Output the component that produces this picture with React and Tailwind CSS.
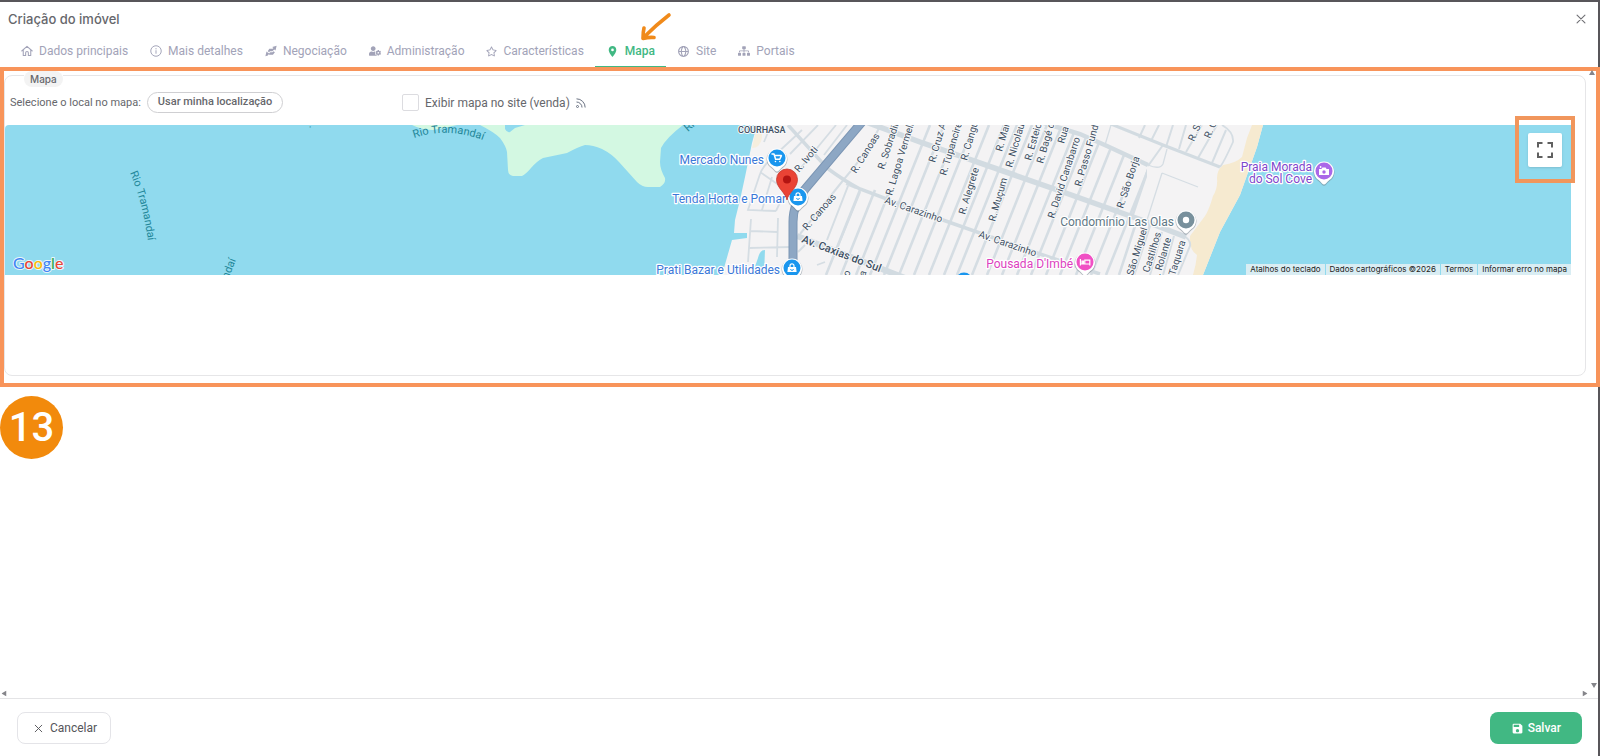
import { useState } from 'react';
import { FaRegStar, FaSitemap, FaUserCog } from 'react-icons/fa';
import { BiGlobe } from 'react-icons/bi';
import { MdLocationOn, MdSave } from 'react-icons/md';
import { IoCloseOutline } from 'react-icons/io5';

const HomeIcon = () => (
  <svg viewBox="0 0 16 16" className="w-3 h-3" fill="none" stroke="currentColor" strokeWidth="1.4" strokeLinejoin="round" strokeLinecap="round">
    <path d="M1 8 8 1.8 15 8M3 6.8V14h3.2v-3.6a1.8 1.8 0 0 1 3.6 0V14H13V6.8" />
  </svg>
);

const InfoIcon = () => (
  <svg viewBox="0 0 16 16" className="w-3 h-3" fill="none" stroke="currentColor" strokeWidth="1.3">
    <circle cx="8" cy="8" r="7" />
    <path d="M8 7v4.6M8 4.2v1.6" />
  </svg>
);

const DealIcon = () => (
  <svg viewBox="0 0 16 16" className="w-3 h-3" fill="currentColor">
    <path d="M15.5 1 14 7.3 12.4 6 9.8 8.4H6.6l-1 1.4L3.6 8.2 5.8 5h4.4l1-1L9.6 2.6z" />
    <path d="M.5 15 2 8.7 3.6 10l2 1.4 1.4-1.6h3l1.4-1.6 1.8 1.6L10.6 13H6L4.8 12.4 3.8 14z" />
  </svg>
);

const TABS = [
  { id: 'dados',           label: 'Dados principais', icon: <HomeIcon /> },
  { id: 'detalhes',        label: 'Mais detalhes',    icon: <InfoIcon /> },
  { id: 'negociacao',      label: 'Negociação',       icon: <DealIcon /> },
  { id: 'administracao',   label: 'Administração',    icon: <FaUserCog size={12} /> },
  { id: 'caracteristicas', label: 'Características',  icon: <FaRegStar size={11} /> },
  { id: 'mapa',            label: 'Mapa',             icon: <MdLocationOn size={13} /> },
  { id: 'site',            label: 'Site',             icon: <BiGlobe size={13} /> },
  { id: 'portais',         label: 'Portais',          icon: <FaSitemap size={12} /> },
];

// x where each cross street meets the bottom edge of the map
const STREETS = [826, 841, 856, 870, 884, 899, 914, 929, 944, 957, 972, 987, 1002, 1017, 1031, 1046, 1060, 1076, 1091, 1106];

const STREET_LABELS = [
  { x: 799,  y: 173, a: -50, t: 'R. Ivoti' },
  { x: 856,  y: 174, a: -58, t: 'R. Canoas' },
  { x: 807,  y: 231, a: -49, t: 'R. Canoas' },
  { x: 884,  y: 170, a: -72, t: 'R. Sobradinho' },
  { x: 892,  y: 196, a: -73, t: 'R. Lagoa Vermelha' },
  { x: 935,  y: 163, a: -74, t: 'R. Cruz Alta' },
  { x: 946,  y: 176, a: -73, t: 'R. Tupanciretã' },
  { x: 967,  y: 161, a: -74, t: 'R. Canguçu' },
  { x: 965,  y: 215, a: -73, t: 'R. Alegrete' },
  { x: 995,  y: 222, a: -74, t: 'R. Muçum' },
  { x: 1002, y: 152, a: -74, t: 'R. Marau' },
  { x: 1012, y: 168, a: -74, t: 'R. Nicolau V.' },
  { x: 1031, y: 161, a: -74, t: 'R. Esteio' },
  { x: 1043, y: 164, a: -74, t: 'R. Bagé da' },
  { x: 1064, y: 144, a: -74, t: 'Rua Jari' },
  { x: 1054, y: 219, a: -72, t: 'R. David Canabarro' },
  { x: 1081, y: 187, a: -74, t: 'R. Passo Fundo' },
  { x: 1123, y: 209, a: -72, t: 'R. São Borja' },
  { x: 1194, y: 142, a: -66, t: 'R. São' },
  { x: 1210, y: 139, a: -66, t: 'R. Gua' },
  { x: 1133, y: 276, a: -73, t: 'São Miguel' },
  { x: 1149, y: 273, a: -73, t: 'Castilhos' },
  { x: 1160, y: 276, a: -73, t: '. Rolante' },
  { x: 1175, y: 276, a: -73, t: 'Taquara' },
  { x: 849,  y: 277, a: -72, t: 'o' },
  { x: 865,  y: 277, a: -72, t: 'a' },
  { x: 884,  y: 203, a: 19,  t: 'Av. Carazinho' },
  { x: 978,  y: 237, a: 19,  t: 'Av. Carazinho' },
];

const PLACES = [
  { x: 777,  y: 158, color: '#1a96ee', text: '#3b78d8', glyph: 'cart',   lines: [{ x: 764,  y: 164, t: 'Mercado Nunes' }] },
  { x: 798,  y: 197, color: '#1a96ee', text: '#3b78d8', glyph: 'bag',    lines: [{ x: 786,  y: 203, t: 'Tenda Horta e Pomar' }] },
  { x: 792,  y: 268, color: '#1a96ee', text: '#3b78d8', glyph: 'bag',    lines: [{ x: 780,  y: 274, t: 'Prati Bazar e Utilidades' }] },
  { x: 1186, y: 220, color: '#78909c', text: '#5f7885', glyph: 'dot',    lines: [{ x: 1174, y: 226, t: 'Condomínio Las Olas' }] },
  { x: 1085, y: 262, color: '#f050c4', text: '#dd3fc0', glyph: 'bed',    lines: [{ x: 1073, y: 268, t: "Pousada D'Imbé" }] },
  { x: 1324, y: 171, color: '#aa68e8', text: '#7e46cc', glyph: 'camera', lines: [{ x: 1312, y: 171, t: 'Praia Morada' }, { x: 1312, y: 183, t: 'do Sol Cove' }] },
];

const GLYPHS = {
  cart: <path d="M-5-4h2l1.6 5.2h4.2L4.4-2.4h-6.6M-1.6 3.6h.1M2.8 3.6h.1" fill="none" stroke="#fff" strokeWidth="1.5" strokeLinecap="round" strokeLinejoin="round" />,
  bag: (
    <>
      <path d="M-4-1h8l.6 5h-9.2z" fill="#fff" />
      <path d="M-2-.6v-1.6a2 2 0 0 1 4 0v1.6" fill="none" stroke="#fff" strokeWidth="1.2" />
      <path d="M-1.4 1a1.4 1.4 0 0 0 2.8 0" fill="none" stroke="#1a96ee" strokeWidth=".9" />
    </>
  ),
  dot: <circle r="3.2" fill="#fff" />,
  bed: <path d="M-4.6-3V3.4M-4.6 2H4.8V3.4M4.8 2V-1.8H-.2V2M-3-.8h1.4V.8H-3z" fill="none" stroke="#fff" strokeWidth="1.2" />,
  camera: (
    <>
      <path d="M-5-2h2.4l1-1.4h3.2l1 1.4H5v6H-5z" fill="#fff" />
      <circle cy="1" r="1.7" fill="#aa68e8" />
      <circle cx="-3.4" cy="-4" r=".9" fill="#fff" />
    </>
  ),
};

const MapPin = ({ place }) => (
  <g>
    {place.lines.map((line) => (
      <text key={line.t} x={line.x} y={line.y} textAnchor="end" fontSize="12" fill={place.text} stroke="#fff" strokeWidth="2.5" paintOrder="stroke" strokeLinejoin="round">
        {line.t}
      </text>
    ))}
    <g transform={`translate(${place.x} ${place.y})`}>
      <path d="M0 14.8c-1.6 0-2.4-2-5.4-4.6A10.4 10.4 0 1 1 5.4 10.2C2.4 12.8 1.6 14.8 0 14.8z" fill="#6b7a85" opacity=".5" />
      <path d="M0 13.5c-1.6 0-2.4-2-5.4-4.6A10 10 0 1 1 5.4 8.9C2.4 11.5 1.6 13.5 0 13.5z" fill="#fff" />
      <circle r="8.5" fill={place.color} />
      {GLYPHS[place.glyph]}
    </g>
  </g>
);

const MapCanvas = () => (
  <svg viewBox="5 125 1566 150" preserveAspectRatio="xMidYMid slice" className="block w-full h-[150px] rounded-tl" role="img" aria-label="Mapa" fontFamily="Roboto, sans-serif">
    <defs>
      <clipPath id="city">
        <path d="M757 125 752 143 745 177 740 200 735 220 734 233H747V238L732 240 722 275H1190L1192 245 1147 222V166L1105 144 1050 125z" />
      </clipPath>
      <path id="river-top" d="M414 138Q449 126 488 142" />
      <path id="river-left" d="M130 173Q143 202 149 248" />
    </defs>

    <rect x="5" y="125" width="1566" height="150" fill="#90daee" />

    {/* Parks */}
    <g fill="#d3f8e2">
      <path d="M480 125Q494 132 500 138 506 146 507 152L508 170Q508 175 513 176H522Q526 174 531 168 537 161 543 158L567 153Q578 147 585 145 593 145 602 149 612 154 619 162L637 182Q642 187 648 187H660Q666 183 665 178 660 169 660 162L661 148Q666 138 683 125z" />
      <path d="M412 125Q422 130 433 130 445 128 457 125z" />
    </g>
    <path d="M505 125V129Q507 133 510 132L515 128 525 125z" fill="#90daee" />

    {/* Land and beach */}
    <path d="M757 125 752 143 745 177 740 200 735 220 734 233H747V238L732 240 722 275H1203L1220 232 1240 195 1257 147 1263 125z" fill="#f4f3f4" />
    <path d="M757 125 752 148Q760 148 762 138V125z" fill="#f6eedd" />
    <path d="M1252 125 1247 138 1242 157Q1236 163 1223 165 1217 170 1217 178 1218 188 1213 196 1209 210 1205 216L1190 236Q1189 250 1197 255 1196 265 1193 275H1203L1220 232 1240 195 1257 147 1263 125z" fill="#f6ead0" />
    <path d="M765 250Q760 250 758 258L752 275H764z" fill="#90daee" />

    {/* Cross streets */}
    <g clipPath="url(#city)" stroke="#d5dde3" strokeWidth="2.6">
      {STREETS.map((x) => (
        <path key={x} d={x < 870 ? `M${x} 275 ${x + 34} 190` : `M${x} 275 ${x + 60} 125`} />
      ))}
      <path d="M1119 275 1136 223M1132 217 1157 143M1134 275 1150 225" />
    </g>
    <g fill="none" stroke="#d5dde3" strokeWidth="2">
      <path d="M1145 125 1139 138M1159 125 1151 141M1173 125 1166 147M1186 125 1179 149M1202 125 1186 152M1217 125 1198 158M1226 130 1212 163M1163 145 1148 166" />
      <path d="M1148 165Q1160 170 1163 164L1167 149M1111 125 1105 145M1162 173 1198 187M1162 173 1147 220" strokeWidth="1.3" />
      <path d="M1220 167Q1224 162 1233 142 1234 132 1222 125" strokeWidth="1.8" />
      <path d="M1150 275 1162 232M1163 275 1174 236M1178 275 1190 246Q1191 240 1184 236" />
      <path d="M802 130 774 156Q762 167 760 174L748 210 776 211M760 172 786 190 776 211M772 177 762 210M836 125 799 170M818 125 790 154M847 125 824 155M771 125 764 142M793 131 808 147" strokeWidth="1.8" />
      <path d="M751 219 748 262M750 231 777 232M778 218 777 257M749 248 792 247M805 245 798 252M817 265 825 262" strokeWidth="1.8" />
      <path d="M879 128Q869 150 845 178L800 234M846 184 856 188" />
      <path d="M848 186 827 240M860 192 838 246" />
    </g>
    <g fill="none" stroke="#d2dbe1">
      <path d="M788 125 827 168Q846 182 860 189L940 219 1040 254 1100 274" strokeWidth="3.5" />
      <path d="M866 122 920 142 1063 192 1147 222 1186 237" strokeWidth="5.5" />
      <path d="M1044 123 1080 134 1107 146 1148 165" strokeWidth="4.5" />
      <path d="M1111 124 1163 145 1220 167" strokeWidth="3" />
      <path d="M797 236 905 278" strokeWidth="6" />
    </g>

    {/* Highway */}
    <path d="M862 122 806 188Q793 203 793 222V275" fill="none" stroke="#7c96b4" strokeWidth="9" />
    <path d="M862 122 806 188Q793 203 793 222V275" fill="none" stroke="#8da7c4" strokeWidth="7" />

    <g fontSize="10" fill="#3f5063" stroke="#f7f8f9" strokeWidth="2" paintOrder="stroke" strokeLinejoin="round">
      {STREET_LABELS.map((s, i) => (
        <text key={i} transform={`translate(${s.x} ${s.y}) rotate(${s.a})`}>{s.t}</text>
      ))}
      <text transform="translate(801 242) rotate(21)" fontSize="11" fontWeight="500">Av. Caxias do Sul</text>
      <text x="738" y="133" fontSize="9" fontWeight="500">COURHASA</text>
    </g>

    {/* Water names */}
    <g fontSize="11" fill="#1f8799">
      <text><textPath href="#river-top">Rio Tramandaí</textPath></text>
      <text><textPath href="#river-left">Rio Tramandaí</textPath></text>
      <text transform="translate(226 285) rotate(-68)">andaí</text>
      <text transform="translate(688 132) rotate(-42)">Rio</text>
      <text transform="translate(309 126) rotate(60)">.</text>
    </g>

    <circle cx="964" cy="281" r="8.5" fill="#1a96ee" />
    {PLACES.map((p) => <MapPin key={p.x} place={p} />)}

    {/* Selected location */}
    <path d="M787 200C786 193 776.5 188 776.5 179.5a10.5 10.5 0 0 1 21 0C797.5 188 788 193 787 200z" fill="#ea4335" stroke="#c5352b" strokeWidth=".8" />
    <circle cx="787" cy="179.5" r="4" fill="#b31412" />

    <text x="13" y="269" fontSize="16" fontFamily="Lato, sans-serif" fontWeight="500" stroke="#e9f6fa" strokeWidth="2" paintOrder="stroke" strokeLinejoin="round">
      <tspan fill="#4285f4">G</tspan><tspan fill="#ea4335">o</tspan><tspan fill="#fbbc04">o</tspan><tspan fill="#4285f4">g</tspan><tspan fill="#34a853">l</tspan><tspan fill="#ea4335">e</tspan>
    </text>
  </svg>
);

const MAP_LINKS = ['Dados cartográficos ©2026', 'Termos', 'Informar erro no mapa'];

const MapView = () => (
  <div className="relative mr-[14px]">
    <MapCanvas />

    <div className="absolute bottom-0 right-0 flex gap-px text-[8px] leading-[11px] text-[#222] font-[Inter,sans-serif]">
      <button className="bg-[#d9edf3] px-1">Atalhos do teclado</button>
      {MAP_LINKS.map((label) => (
        <a key={label} href="#mapa" className="bg-[#d9edf3] px-1">{label}</a>
      ))}
    </div>

    <div className="absolute -top-[9px] -right-1 flex h-[67px] w-[60px] items-center justify-center border-4 border-[#f1965c]">
      <button aria-label="Tela cheia" className="flex h-[34px] w-[34px] items-center justify-center rounded-xs bg-white text-[#606060] shadow">
        <svg viewBox="0 0 16 16" className="w-4 h-4" fill="none" stroke="currentColor" strokeWidth="2">
          <path d="M1 5.5V1h4.500M10.500 1H15v4.500M15 10.500V15h-4.500M5.500 15H1v-4.500" />
        </svg>
      </button>
    </div>
  </div>
);

const RssIcon = () => (
  <svg viewBox="0 0 12 12" className="w-[10px] h-[10px] text-gray-500" fill="none" stroke="currentColor" strokeWidth="1.2">
    <path d="M.6 1A10.4 10.4 0 0 1 11 11.4M.6 4.800a6.600 6.600 0 0 1 6.600 6.600" />
    <circle cx="1.8" cy="10.2" r="1.2" />
  </svg>
);

const Caret = ({ className }) => (
  <svg viewBox="0 0 6 5" className={`absolute w-[6px] h-[5px] text-[#85858a] ${className}`} fill="currentColor">
    <path d="M3 0 6 5H0z" />
  </svg>
);

const PointerArrow = () => (
  <svg viewBox="0 0 32 30" className="absolute left-[45px] -top-6 w-8 h-[30px]" fill="none" stroke="#f08a1a" strokeWidth="3.6" strokeLinecap="round" strokeLinejoin="round">
    <path d="M29 3Q16 13 3 26M4 16Q3 20 3 26.500 9 25 14 25.500" />
  </svg>
);

const App = () => {
  const [active, setActive] = useState('mapa');
  const [showOnSite, setShowOnSite] = useState(false);

  return (
    <div className="flex flex-col min-h-screen bg-white border-t-2 border-r-2 border-[#58565a] font-[Roboto,sans-serif] text-[#66676c]">
      {/* Header */}
      <header className="flex items-center justify-between pl-2 pr-2 pt-2">
        <h1 className="text-[13px] leading-[18px] font-medium font-[Inter,sans-serif]">Criação do imóvel</h1>
        <button aria-label="Fechar" className="text-[#707075]"><IoCloseOutline size={18} /></button>
      </header>

      <nav className="flex pl-[10px] pt-2">
        {TABS.map((tab) => (
          <button
            key={tab.id}
            onClick={() => setActive(tab.id)}
            className={`relative flex h-[31px] items-center gap-1.5 border-b px-[11px] text-xs ${
              active === tab.id ? 'border-[#41b883] text-[#41b883] font-medium' : 'border-transparent text-[#a2a3b8]'
            }`}
          >
            {tab.icon}
            <span>{tab.label}</span>
            {tab.id === 'mapa' && <PointerArrow />}
          </button>
        ))}
      </nav>

      {/* Tab content */}
      <main className="relative flex-1">
        <section className="-mr-0.5 border-4 border-[#f8945a] pb-[7px]">
          <fieldset className="mr-[10px] min-w-0 rounded-lg border border-[#e6e6e8] pb-[100px]">
            <legend className="ml-[19px] flex h-[9px] items-start">
              <span className="rounded-full bg-[#f3f3f3] px-1.5 text-[10px] leading-4 font-medium font-[Inter,sans-serif]">Mapa</span>
            </legend>

            <div className="grid grid-cols-4 py-3">
              <div className="flex items-center gap-1.5 pl-[5px]">
                <span className="text-[11px] leading-[21px]">Selecione o local no mapa:</span>
                <button className="h-[21px] rounded-full border border-[#cfcfd2] px-2.5 text-[11px] font-medium">
                  Usar minha localização
                </button>
              </div>
              <div className="flex items-center gap-1.5 pl-0.5">
                <input
                  id="exibir"
                  type="checkbox"
                  checked={showOnSite}
                  onChange={(e) => setShowOnSite(e.target.checked)}
                  className="h-[17px] w-[17px] appearance-none rounded-xs border border-[#dcdce0] bg-white checked:bg-[#41b883]"
                />
                <label htmlFor="exibir" className="text-xs">Exibir mapa no site (venda)</label>
                <RssIcon />
              </div>
            </div>

            <MapView />
          </fieldset>
        </section>

        <div className="mt-[9px] flex h-[63px] w-[63px] items-center justify-center rounded-full bg-[#f28a0c] text-[40px] leading-none font-medium text-white">
          13
        </div>

        <Caret className="right-[3px] top-[3px]" />
        <Caret className="right-px bottom-[10px] rotate-180" />
        <Caret className="right-[10px] bottom-[2px] rotate-90" />
        <Caret className="left-px bottom-[2px] -rotate-90" />
      </main>

      {/* Footer */}
      <footer className="flex items-center justify-between border-t border-[#e4e4e6] pl-[17px] pr-4 pt-[13px] pb-3">
        <button className="flex h-8 items-center gap-1 rounded-lg border border-[#e4e4e8] px-[13px] text-xs text-[#55555a]">
          <IoCloseOutline size={15} />
          Cancelar
        </button>
        <button className="flex h-8 items-center gap-1 rounded-lg bg-[#41b883] px-[21px] text-xs font-medium text-white">
          <MdSave size={13} />
          Salvar
        </button>
      </footer>
    </div>
  );
};

export default App;
